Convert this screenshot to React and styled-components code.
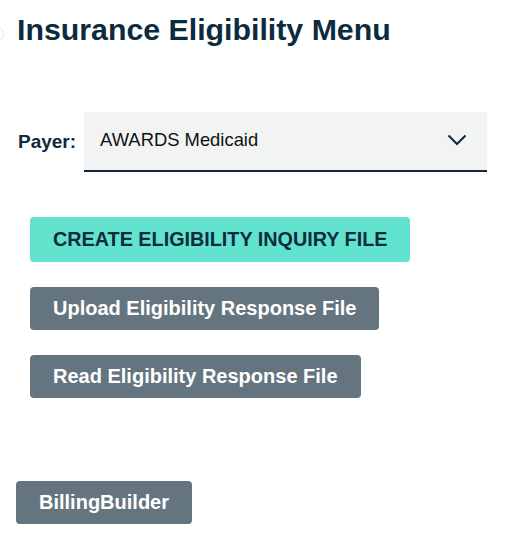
import React, { useState } from "react";
import styled, { createGlobalStyle } from "styled-components";

const GlobalStyle = createGlobalStyle`
  body {
    margin: 0;
    background: #ffffff;
    font-family: "Liberation Sans", Arial, sans-serif;
  }
`;

const payers = ["AWARDS Medicaid", "AWARDS Medicare", "Commercial"];

export default function App() {
  const [payer, setPayer] = useState(payers[0]);

  return (
    <>
      <GlobalStyle />
      <Page>
        <Header>
          <BackMark />
          <Title>Insurance Eligibility Menu</Title>
        </Header>

        <PayerRow>
          <Label>Payer:</Label>
          <Select>
            <span>{payer}</span>
            <svg width="20" height="12" viewBox="0 0 20 12" fill="none">
              <path d="M1.5 1.5 L10 10 L18.5 1.5" stroke="#0d2b3e" strokeWidth="2" />
            </svg>
          </Select>
        </PayerRow>

        <Actions>
          <Button $primary onClick={() => setPayer(payer)}>
            Create Eligibility Inquiry File
          </Button>
          <Button>Upload Eligibility Response File</Button>
          <Button>Read Eligibility Response File</Button>
        </Actions>

        <Footer>
          <Button>BillingBuilder</Button>
        </Footer>
      </Page>
    </>
  );
}

const Page = styled.div`
  display: flex;
  flex-direction: column;
  width: 510px;
  min-height: 556px;
  color: #0d2b3e;
`;

const Header = styled.div`
  display: flex;
  align-items: center;
  padding: 12px 0 0 0;
`;

const BackMark = styled.div`
  width: 14px;
  height: 14px;
  margin: 8px 13px 0 -12px;
  border-radius: 50%;
  border: 1px solid #e4e6e8;
`;

const Title = styled.h1`
  margin: 0;
  font-size: 30.3px;
  font-weight: bold;
  line-height: 35px;
  color: #0d2b3e;
`;

const PayerRow = styled.div`
  display: flex;
  align-items: center;
  gap: 8px;
  margin: 65px 0 0 18px;
`;

const Label = styled.label`
  font-size: 19px;
  font-weight: bold;
  color: #0d2b3e;
`;

const Select = styled.div`
  display: flex;
  align-items: center;
  justify-content: space-between;
  box-sizing: border-box;
  width: 403px;
  height: 60px;
  padding: 0 20px 2px 16px;
  background: #f2f4f4;
  border-bottom: 2px solid #0d2b3e;
  font-size: 18.4px;
  color: #111111;
`;

const Actions = styled.div`
  display: flex;
  flex-direction: column;
  align-items: flex-start;
  gap: 25px;
  margin: 45px 0 0 30px;
`;

const Button = styled.button`
  box-sizing: border-box;
  height: ${(p) => (p.$primary ? "45px" : "43px")};
  padding: 0 23px;
  border: none;
  border-radius: 4px;
  background: ${(p) => (p.$primary ? "#62e3cd" : "#65757f")};
  color: ${(p) => (p.$primary ? "#0d2b3e" : "#ffffff")};
  font-family: "Liberation Sans", Arial, sans-serif;
  font-size: ${(p) => (p.$primary ? "19.8px" : "20px")};
  font-weight: bold;
  text-transform: ${(p) => (p.$primary ? "uppercase" : "none")};
  cursor: pointer;
`;

const Footer = styled.div`
  display: flex;
  margin: 83px 0 0 16px;
`;
